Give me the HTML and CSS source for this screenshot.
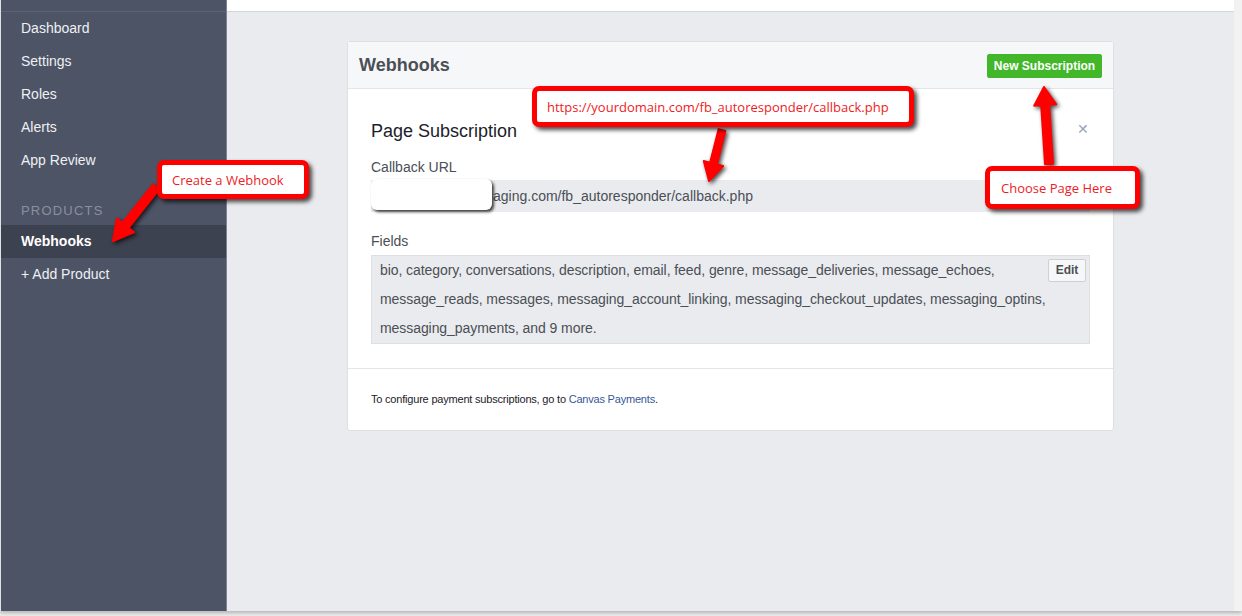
FILE: index.html
```html
<!DOCTYPE html>
<html>
<head>
<meta charset="utf-8">
<link rel="stylesheet" href="styles.css">
</head>
<body>
<div class="screen">
  <div class="app">
    <aside class="sidebar">
      <div class="side-top"></div>
      <nav class="nav">
        <a class="nav-item">Dashboard</a>
        <a class="nav-item">Settings</a>
        <a class="nav-item">Roles</a>
        <a class="nav-item">Alerts</a>
        <a class="nav-item">App Review</a>
        <div class="nav-label">PRODUCTS</div>
        <a class="nav-item active">Webhooks</a>
        <a class="nav-item">+ Add Product</a>
      </nav>
    </aside>
    <main class="main">
      <div class="topbar"></div>
      <section class="card">
        <header class="card-head">
          <h1 class="card-title">Webhooks</h1>
          <button class="btn-green">New Subscription</button>
        </header>
        <div class="card-body">
          <div class="sub-head">
            <h2 class="sub-title">Page Subscription</h2>
            <span class="close">&#x2715;</span>
          </div>
          <div class="label">Callback URL</div>
          <div class="url-box">
            <span class="redact"></span>
            <span class="url-text">aging.com/fb_autoresponder/callback.php</span>
          </div>
          <div class="label label-fields">Fields</div>
          <div class="fields-box">
            <button class="btn-edit">Edit</button>
            bio, category, conversations, description, email, feed, genre, message_deliveries, message_echoes, message_reads, messages, messaging_account_linking, messaging_checkout_updates, messaging_optins, messaging_payments, and 9 more.
          </div>
        </div>
        <footer class="card-foot">
          To configure payment subscriptions, go to <a class="link">Canvas Payments</a>.
        </footer>
      </section>
    </main>
    <div class="right-strip"></div>
  </div>

  <svg class="arrows" width="1242" height="616" viewBox="0 0 1242 616">
    <polygon points="725.39,130.86 716.84,164.42 723.14,166.03 709,181 703.76,161.09 710.06,162.70 718.61,129.14" />
    <polygon points="159.13,189.49 128.59,227.85 134.06,232.21 113,241 116.86,218.51 122.33,222.87 152.87,184.51" />
    <polygon points="1052.99,163.74 1049.16,104.70 1056.15,104.25 1044,87 1034.19,105.67 1041.18,105.22 1045.01,164.26" />
  </svg>

  <div class="callout callout-url">https://yourdomain.com/fb_autoresponder/callback.php</div>
  <div class="callout callout-webhook">Create a Webhook</div>
  <div class="callout callout-page">Choose Page Here</div>
</div>
</body>
</html>
```
FILE: styles.css
```css
* { box-sizing: border-box; }
html, body { margin: 0; padding: 0; }
body {
  width: 1242px;
  height: 616px;
  overflow: hidden;
  background: #d9d9d9;
  font-family: "Liberation Sans", Arial, Helvetica, sans-serif;
}
.screen {
  position: relative;
  width: 1242px;
  height: 616px;
  background: linear-gradient(#c9c9c9, #eeeeee);
}
.app {
  display: flex;
  height: 611px;
  background: #e9ebee;
  box-shadow: 0 2px 4px rgba(0,0,0,0.25);
}
.sidebar {
  width: 227px;
  flex: none;
  background: #4d5466;
  border-left: 1px solid #dfe1e6;
  border-right: 1px solid #7c8394;
}
.side-top {
  height: 12px;
  border-bottom: 1px solid #5b6273;
}
.nav { display: flex; flex-direction: column; }
.nav-item {
  display: block;
  height: 33px;
  line-height: 33px;
  padding-left: 20px;
  font-size: 14px;
  color: #eef0f3;
}
.nav-item.active {
  background: #3d4250;
  font-weight: bold;
  color: #ffffff;
}
.nav-label {
  margin-top: 26px;
  margin-bottom: 6px;
  height: 16px;
  line-height: 16px;
  padding-left: 20px;
  font-size: 13px;
  letter-spacing: 1.2px;
  color: #8a909d;
}
.main {
  flex: 1;
  display: flex;
  flex-direction: column;
}
.topbar {
  height: 12px;
  background: #ffffff;
  border-bottom: 1px solid #d3d6db;
}
.right-strip {
  width: 8px;
  flex: none;
  background: #f2f2f2;
}
.card {
  margin-top: 29px;
  margin-left: 120px;
  width: 767px;
  background: #ffffff;
  border: 1px solid #dddfe2;
  border-radius: 3px;
}
.card-head {
  display: flex;
  align-items: center;
  justify-content: space-between;
  height: 47px;
  padding: 0 11px 0 11px;
  background: #f6f7f9;
  border-bottom: 1px solid #e5e5e5;
}
.card-title {
  margin: 0;
  font-size: 18px;
  font-weight: bold;
  color: #4b4f56;
}
.btn-green {
  height: 24px;
  width: 115px;
  padding: 0;
  border: 1px solid #42b72a;
  border-radius: 2px;
  background: #42b72a;
  color: #ffffff;
  font-family: inherit;
  font-size: 12px;
  font-weight: bold;
  margin-top: 1px;
}
.card-body {
  padding: 31px 23px 24px 23px;
  border-bottom: 1px solid #e5e5e5;
}
.sub-head {
  display: flex;
  justify-content: space-between;
  align-items: center;
  height: 22px;
}
.sub-title {
  margin: 0;
  font-size: 18px;
  font-weight: normal;
  color: #1d2129;
  line-height: 22px;
}
.close {
  font-size: 14px;
  color: #9aa3b8;
  margin-right: 1px;
  margin-top: -4px;
}
.label {
  margin-top: 16px;
  font-size: 14px;
  line-height: 18px;
  color: #4b4f56;
}
.label-fields { margin-top: 20px; }
.url-box {
  position: relative;
  margin-top: 4px;
  height: 32px;
  line-height: 32px;
  padding-left: 122px;
  background: #e9ebee;
  font-size: 14px;
  color: #4b4f56;
}
.redact {
  position: absolute;
  left: 0;
  top: -1px;
  width: 121px;
  height: 31px;
  background: #ffffff;
  border-radius: 6px;
  box-shadow: 2px 2px 3px rgba(0,0,0,0.75);
}
.fields-box {
  margin-top: 5px;
  padding: 0 7px 0 8px;
  background: #e9ebee;
  border: 1px solid #dddfe2;
  font-size: 14px;
  line-height: 29px;
  letter-spacing: -0.07px;
  color: #4b4f56;
}
.btn-edit {
  float: right;
  margin: 3px -4px 0 6px;
  height: 23px;
  width: 38px;
  padding: 0;
  background: #f6f7f9;
  border: 1px solid #ced0d4;
  border-radius: 2px;
  font-family: inherit;
  font-size: 12px;
  font-weight: bold;
  color: #4b4f56;
  line-height: 21px;
  letter-spacing: 0;
}
.card-foot {
  height: 61px;
  padding-top: 22px;
  padding-left: 23px;
  font-size: 11px;
  line-height: 16px;
  color: #1d2129;
  letter-spacing: -0.2px;
}
.link { color: #365899; }
.arrows {
  position: absolute;
  left: 0;
  top: 0;
  fill: #ff0000;
  stroke: #ff0000;
  stroke-width: 2px;
  stroke-linejoin: round;
  filter: drop-shadow(2px 2px 2px rgba(0,0,0,0.7));
}
.callout {
  position: absolute;
  background: #ffffff;
  border: 5px solid #ff0000;
  border-radius: 7px;
  box-shadow: 3px 3px 4px rgba(0,0,0,0.7);
  color: #ee1c25;
  font-family: "Open Sans", "Noto Sans", sans-serif;
  font-size: 13px;
  padding-left: 10px;
  display: flex;
  align-items: center;
}
.callout-url { left: 532px; top: 86px; width: 382px; height: 41px; }
.callout-webhook { left: 157px; top: 160px; width: 152px; height: 39px; }
.callout-page { left: 985px; top: 166px; width: 155px; height: 43px; padding-left: 11px; }
```
